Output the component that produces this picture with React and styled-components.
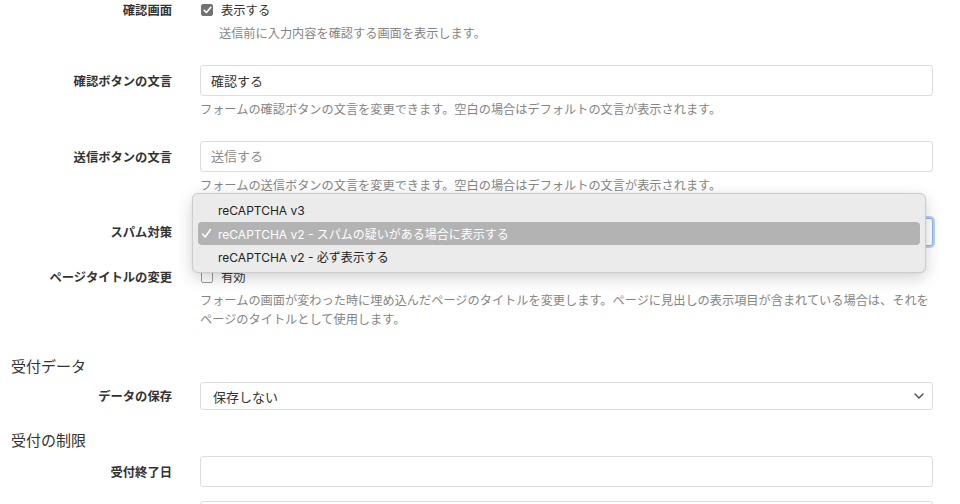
import React from "react";
import styled, { createGlobalStyle } from "styled-components";

const Global = createGlobalStyle`
  html, body { margin: 0; padding: 0; background: #fff; }
  body {
    font-family: "Liberation Sans", "Noto Sans CJK JP", sans-serif;
    color: #333;
    -webkit-font-smoothing: antialiased;
  }
  * { box-sizing: border-box; }
`;

const Page = styled.div`
  width: 960px;
  height: 504px;
  overflow: hidden;
  display: flex;
  flex-direction: column;
`;

const FieldRow = styled.div`
  display: grid;
  grid-template-columns: 172px 733px;
  column-gap: 28px;
  margin-top: ${(p) => p.$mt || 0}px;
`;

const Label = styled.div`
  height: ${(p) => p.$h}px;
  display: flex;
  align-items: center;
  justify-content: flex-end;
  font-size: 12.3px;
  font-weight: 700;
  color: #333;
  white-space: nowrap;
`;

const Control = styled.div`
  display: flex;
  flex-direction: column;
  gap: ${(p) => p.$gap || 0}px;
  position: relative;
`;

const CheckLine = styled.label`
  height: 20px;
  display: flex;
  align-items: center;
  gap: 8px;
  padding-left: 1px;
  font-size: 12.3px;
  color: #333;
`;

const Box = styled.span`
  width: 12px;
  height: 12px;
  border-radius: 2px;
  display: inline-flex;
  align-items: center;
  justify-content: center;
  background: ${(p) => (p.$checked ? "#737373" : "#fff")};
  border: 1px solid ${(p) => (p.$checked ? "#737373" : "#9a9a9a")};
`;

const Help = styled.div`
  font-size: 12.2px;
  line-height: 19px;
  color: #858585;
  margin-top: 5px;
  padding-left: ${(p) => p.$indent || 0}px;
`;

const TextInput = styled.input`
  height: 31px;
  width: 100%;
  border: 1px solid #dedede;
  border-radius: 3px;
  padding: 0 10px;
  font-family: inherit;
  font-size: 13px;
  color: #333;
  background: #fff;
  outline: none;
  &::placeholder { color: #8c8c8c; }
`;

const SelectBox = styled.div`
  height: 28px;
  width: 100%;
  border: 1px solid ${(p) => (p.$focus ? "#8fb2ea" : "#dedede")};
  border-radius: 3px;
  padding: 0 8px 0 12px;
  display: flex;
  align-items: center;
  justify-content: space-between;
  font-size: 13px;
  color: #333;
  background: #fff;
  box-shadow: ${(p) => (p.$focus ? "0 0 0 2px rgba(130,170,235,0.55)" : "none")};
`;

const SectionHeading = styled.div`
  font-size: 15px;
  line-height: 22px;
  color: #333;
  padding-left: 11px;
  margin-top: ${(p) => p.$mt}px;
  margin-bottom: 4px;
`;

const Menu = styled.div`
  position: absolute;
  top: -25px;
  left: -8px;
  width: 734px;
  padding: 5px 5px 4px;
  background: #ebebeb;
  border: 1px solid #cdcdcd;
  border-radius: 6px;
  box-shadow: 0 5px 16px rgba(0, 0, 0, 0.18), 0 0 2px rgba(0, 0, 0, 0.08);
  font-family: Inter, "Noto Sans CJK JP", sans-serif;
  z-index: 10;
`;

const MenuItem = styled.div`
  position: relative;
  height: 23px;
  display: flex;
  align-items: center;
  padding-left: 20px;
  border-radius: 4px;
  font-size: 12px;
  font-weight: 400;
  color: ${(p) => (p.$selected ? "#fff" : "#222")};
  background: ${(p) => (p.$selected ? "#b3b3b3" : "transparent")};
`;

const Tick = styled.span`
  position: absolute;
  left: 3px;
  top: 6px;
  display: flex;
`;

const Check = ({ checked, children }) => (
  <CheckLine>
    <Box $checked={checked}>
      {checked && (
        <svg width="9" height="8" viewBox="0 0 9 8">
          <path d="M1.2 4.3 L3.5 6.5 L7.8 1.3" fill="none" stroke="#fff" strokeWidth="1.6" strokeLinecap="round" strokeLinejoin="round" />
        </svg>
      )}
    </Box>
    {children}
  </CheckLine>
);

const Chevron = () => (
  <svg width="10" height="6" viewBox="0 0 10 6">
    <path d="M1 1 L5 5 L9 1" fill="none" stroke="#444" strokeWidth="1.3" strokeLinecap="round" strokeLinejoin="round" />
  </svg>
);

export default function App() {
  return (
    <>
      <Global />
      <Page>
        <FieldRow>
          <Label $h={20}>確認画面</Label>
          <Control>
            <Check checked>表示する</Check>
            <Help $indent={19}>送信前に入力内容を確認する画面を表示します。</Help>
          </Control>
        </FieldRow>

        <FieldRow $mt={21}>
          <Label $h={31}>確認ボタンの文言</Label>
          <Control>
            <TextInput readOnly value="確認する" />
            <Help>フォームの確認ボタンの文言を変更できます。空白の場合はデフォルトの文言が表示されます。</Help>
          </Control>
        </FieldRow>

        <FieldRow $mt={21}>
          <Label $h={31}>送信ボタンの文言</Label>
          <Control>
            <TextInput readOnly placeholder="送信する" />
            <Help>フォームの送信ボタンの文言を変更できます。空白の場合はデフォルトの文言が表示されます。</Help>
          </Control>
        </FieldRow>

        <FieldRow $mt={22}>
          <Label $h={28}>スパム対策</Label>
          <Control>
            <SelectBox $focus>
              <span>reCAPTCHA v2 - スパムの疑いがある場合に表示する</span>
              <Chevron />
            </SelectBox>
            <Menu>
              <MenuItem>reCAPTCHA v3</MenuItem>
              <MenuItem $selected>
                <Tick>
                  <svg width="11" height="11" viewBox="0 0 11 11">
                    <path d="M1.5 6 L4.2 9 L9.5 1.5" fill="none" stroke="#fff" strokeWidth="1.5" strokeLinecap="round" strokeLinejoin="round" />
                  </svg>
                </Tick>
                reCAPTCHA v2 - スパムの疑いがある場合に表示する
              </MenuItem>
              <MenuItem>reCAPTCHA v2 - 必ず表示する</MenuItem>
            </Menu>
          </Control>
        </FieldRow>

        <FieldRow $mt={21}>
          <Label $h={20}>ページタイトルの変更</Label>
          <Control>
            <Check>有効</Check>
            <Help>
              フォームの画面が変わった時に埋め込んだページのタイトルを変更します。ページに見出しの表示項目が含まれている場合は、それをページのタイトルとして使用します。
            </Help>
          </Control>
        </FieldRow>

        <SectionHeading $mt={26}>受付データ</SectionHeading>
        <FieldRow>
          <Label $h={28}>データの保存</Label>
          <Control>
            <SelectBox>
              <span>保存しない</span>
              <Chevron />
            </SelectBox>
          </Control>
        </FieldRow>

        <SectionHeading $mt={20}>受付の制限</SectionHeading>
        <FieldRow>
          <Label $h={31}>受付終了日</Label>
          <Control $gap={14}>
            <TextInput readOnly />
            <TextInput readOnly />
          </Control>
        </FieldRow>
      </Page>
    </>
  );
}
